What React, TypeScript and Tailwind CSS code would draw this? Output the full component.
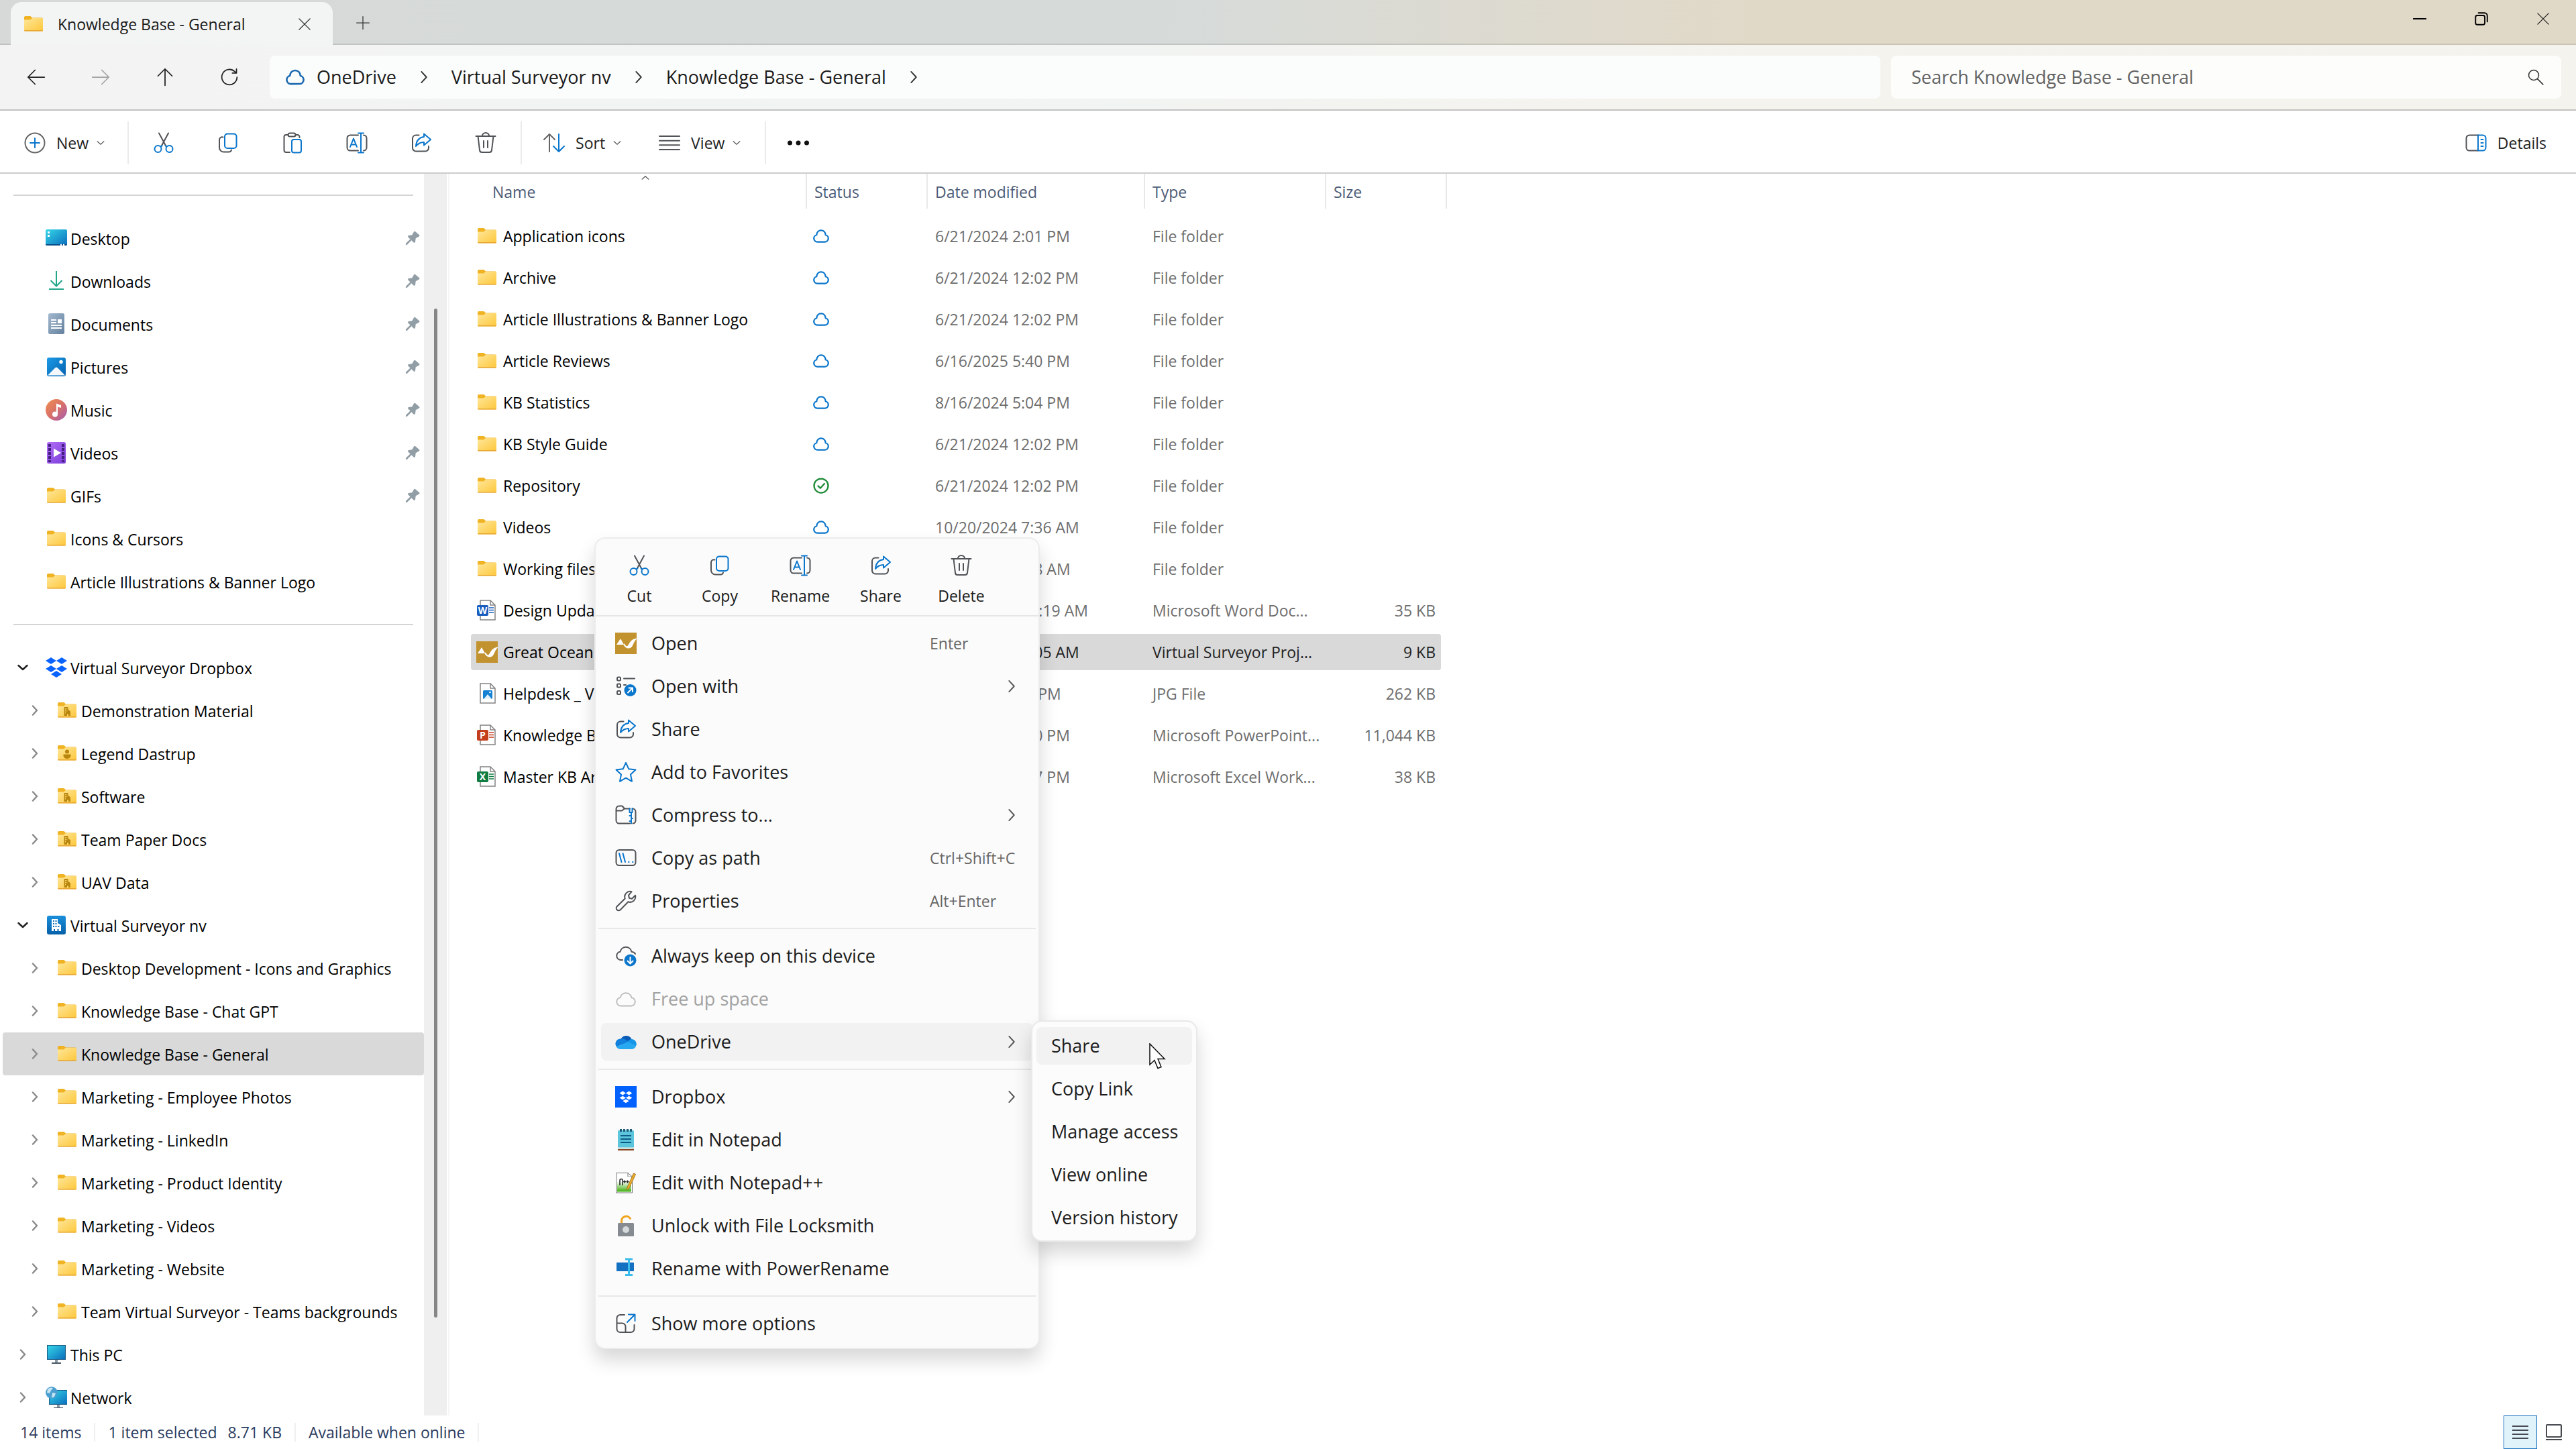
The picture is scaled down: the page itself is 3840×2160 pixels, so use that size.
import type { ReactNode } from "react";
import { clsx } from "clsx";

type IconProps = { className?: string };

const GRAY = "#505357";
const BLUE = "#0a76cc";

/* ── Line icons ── */
function Line({ children, className = "size-8", width = 2, color = GRAY }: IconProps & { children: ReactNode; width?: number; color?: string }) {
  return (
    <svg viewBox="0 0 32 32" className={clsx("shrink-0", className)} fill="none" stroke={color} strokeWidth={width} strokeLinecap="round" strokeLinejoin="round" aria-hidden>
      {children}
    </svg>
  );
}

const CutIcon = (p: IconProps) => (
  <Line {...p}>
    <path d="M9 1.500 19.500 21M23 1.500 12.500 21" />
    <circle cx="7.500" cy="25" r="5" stroke={BLUE} />
    <circle cx="24.500" cy="25" r="5" stroke={BLUE} />
    <path d="m13.500 20-2 1.500M18.500 20l2 1.500" stroke={BLUE} />
  </Line>
);

const CopyIcon = (p: IconProps) => (
  <Line {...p}>
    <path d="M8.500 7.500A4 4 0 0 0 3 11.500V23a6.500 6.500 0 0 0 6.500 6.500H17a4 4 0 0 0 4-3" />
    <rect x="11" y="2.500" width="17.500" height="21.500" rx="4" stroke={BLUE} />
  </Line>
);

const PasteIcon = (p: IconProps) => (
  <Line {...p}>
    <path d="M9.500 4H6.500A3 3 0 0 0 3.500 7v20a3 3 0 0 0 3 3H12M20.500 4h3a3 3 0 0 1 3 3v1" />
    <rect x="9.500" y="1.500" width="11" height="5" rx="2.500" />
    <rect x="15" y="11" width="14" height="19.500" rx="3" stroke={BLUE} />
  </Line>
);

const RenameIcon = (p: IconProps) => (
  <Line {...p}>
    <path d="M18 4.500H6A4.500 4.500 0 0 0 1.500 9v14A4.500 4.500 0 0 0 6 27.500h12M26 4.500a4.500 4.500 0 0 1 4.500 4.500v14a4.500 4.500 0 0 1-4.500 4.500" />
    <path d="M22 1.500v29M18 1.500h8M18 30.500h8M6 22l5-12.500L16 22M7.500 18.500h7" stroke={BLUE} />
  </Line>
);

const ShareIcon = (p: IconProps) => (
  <Line {...p}>
    <path d="M12.500 4.500H8A5 5 0 0 0 3 9.500v14a5 5 0 0 0 5 5h14a5 5 0 0 0 5-5V21" />
    <path d="M20 2.500 30 11 20 19.500V15c-5 0-8.500 1.500-12 6C8.500 13.500 12.500 8 20 7z" stroke={BLUE} />
  </Line>
);

const DeleteIcon = (p: IconProps) => (
  <Line {...p}>
    <path d="M1.500 6h29M11 5.500a5 4.500 0 0 1 10 0M4.500 6l2.500 21a3.500 3.500 0 0 0 3.500 3h11a3.500 3.500 0 0 0 3.500-3l2.500-21M13 13v10M19 13v10" />
  </Line>
);

const CloudIcon = ({ className, color = BLUE }: IconProps & { color?: string }) => (
  <Line className={className} color={color} width={3}>
    <path d="M8.500 27.500a7 7 0 0 1-1.500-13.800C7.500 8.500 11 4.500 16 4.500s8.500 4 9 9.200a7 7 0 0 1-1.500 13.800z" />
  </Line>
);

const Chevron = ({ className, color = "#555", width = 3, d = "M10 3l12 13-12 13" }: IconProps & { color?: string; width?: number; d?: string }) => (
  <Line className={className} color={color} width={width}>
    <path d={d} />
  </Line>
);

const DOWN = "M3 10l13 12 13-12";

const CloseIcon = (p: IconProps) => <Line {...p} color="#222"><path d="M3 3l26 26M29 3 3 29" /></Line>;

const StarIcon = (p: IconProps) => (
  <Line {...p} color={BLUE}>
    <path d="m16 2 4.300 9.300 10.200 1.200-7.500 7 2 10.300L16 24.700 7 29.800l2-10.300-7.500-7 10.200-1.200z" />
  </Line>
);

const OpenWithIcon = (p: IconProps) => (
  <Line {...p}>
    <rect x="3" y="2.500" width="5" height="5" rx="1.500" />
    <rect x="3" y="12.500" width="5" height="5" rx="1.500" />
    <rect x="3" y="23" width="5" height="5" rx="1.500" />
    <path d="M13 4.500h16M13 14h3" />
    <circle cx="22.500" cy="22" r="9" fill={BLUE} stroke="none" />
    <path d="M19 25.500l7-7M20.500 18.500H26V24" stroke="#fff" />
  </Line>
);

const CompressIcon = (p: IconProps) => (
  <Line {...p}>
    <path d="M22 6.500h-8l-3.500-4H6A4.500 4.500 0 0 0 1.500 7v17A4.500 4.500 0 0 0 6 28.500h16M1.500 9.500H10l4-3M26 6.500a4.500 4.500 0 0 1 4.500 4.500v13a4.500 4.500 0 0 1-4 4.500" />
    <path d="M21.500 6v6h4V6M24 12v16.500M21.500 17H24M24 21h2M21.500 25H24" stroke={BLUE} />
  </Line>
);

const PathIcon = (p: IconProps) => (
  <Line {...p}>
    <rect x="1.500" y="4" width="29" height="23" rx="4.500" />
    <path d="M6 9l3.500 13M11.500 9 15 22M20 22h.5M26 22h.5" stroke={BLUE} />
  </Line>
);

const WrenchIcon = (p: IconProps) => (
  <Line {...p}>
    <path d="M24.500 2.200a8 8 0 0 0-9.800 10.300L2.700 24.300a3.500 3.500 0 0 0 5 5l11.800-12A8 8 0 0 0 30 7.700l-5 5-4-1-1-4z" />
  </Line>
);

const KeepIcon = (p: IconProps) => (
  <Line {...p}>
    <path d="M11 22H8A6.200 6.200 0 0 1 7.500 9.700 8.700 8.700 0 0 1 24.500 9.700c2.500.2 4.500 1.300 5.500 3.300" />
    <circle cx="22.500" cy="22.500" r="9" fill={BLUE} stroke="none" />
    <path d="M22.500 18v9M18.500 23.500l4 4 4-4" stroke="#fff" />
  </Line>
);

const FreeUpIcon = () => (
  <Line color="#bdbdbd">
    <path d="M8 26.500A6.200 6.200 0 0 1 7.500 14.200a8.700 8.700 0 0 1 17 0A6.200 6.200 0 0 1 24 26.500z" />
  </Line>
);

const MoreOptionsIcon = (p: IconProps) => (
  <Line {...p}>
    <path d="M14 3H7.500A5 5 0 0 0 2.500 8v16a5 5 0 0 0 5 5h16a5 5 0 0 0 5-5v-6M2.500 15.500h8a5 5 0 0 1 5 5V29" />
    <path d="M18 14 29 3M20 2.500h9.500V12" stroke={BLUE} />
  </Line>
);

/* ── Coloured icons ── */
function FolderIcon({ className = "w-7 h-6", badge }: IconProps & { badge?: "building" | "person" }) {
  return (
    <svg viewBox="0 0 28 24" className={clsx("shrink-0", className)} aria-hidden>
      <defs>
        <linearGradient id="folder" x1="0" y1="0" x2="1" y2="1">
          <stop offset="0" stopColor="#ffe79b" />
          <stop offset="1" stopColor="#fdc73a" />
        </linearGradient>
      </defs>
      <path d="M0 2a2 2 0 0 1 2-2h7.500l2.500 2.500H26a2 2 0 0 1 2 2V8H0z" fill="#f0b323" />
      <path d="M0 5.500h9L12 3h15a1 1 0 0 1 1 1v17a1.500 1.500 0 0 1-1.500 1.500h-25A1.500 1.500 0 0 1 0 21z" fill="url(#folder)" />
      <path d="M0 21h28a1.500 1.500 0 0 1-1.500 1.500h-25A1.500 1.500 0 0 1 0 21z" fill="#e8a735" />
      {badge === "building" && (
        <g>
          <path d="M10 7h5.500v3.500l3.500 3V20H9.500V7z" fill="#b8860f" />
          <path d="M11 9h1v1.500h-1zM13.200 9h1v1.500h-1zM11 12h1v1.500h-1zM13.200 12h1v1.500h-1zM11 15h1v1.500h-1zM14 17.500h2V20h-2z" fill="#fbd865" />
        </g>
      )}
      {badge === "person" && (
        <g fill="#b8860f">
          <circle cx="14" cy="9.500" r="3" />
          <path d="M8.500 13.500h11v2a5.500 4.500 0 0 1-11 0z" />
        </g>
      )}
    </svg>
  );
}

function Art({ children, className = "size-8" }: IconProps & { children: ReactNode }) {
  return <svg viewBox="0 0 32 32" className={clsx("shrink-0", className)} aria-hidden>{children}</svg>;
}

const DesktopIcon = () => (
  <Art>
    <defs>
      <linearGradient id="desk" x1="0" y1="0" x2="1" y2="1">
        <stop offset="0" stopColor="#34d6e8" />
        <stop offset="1" stopColor="#0b6dbd" />
      </linearGradient>
    </defs>
    <rect y="3" width="32" height="24" rx="2" fill="url(#desk)" />
    <path d="M0 25h32a2 2 0 0 1-2 2H2a2 2 0 0 1-2-2z" fill="#0a4d86" />
    <path d="M3 6h3v3H3zM3 11h3v3H3zM22 25h2v2h-2zM26 25h2v2h-2z" fill="#fff" />
  </Art>
);

const DownloadsIcon = () => (
  <Art>
    <path d="M16 1v22M7.500 15l8.500 8.500 8.500-8.500M5 28h22" fill="none" stroke="#1fa588" strokeWidth="2" />
  </Art>
);

const DocumentsIcon = () => (
  <Art>
    <defs>
      <linearGradient id="docs" x1="0" y1="0" x2="1" y2="1">
        <stop offset="0" stopColor="#a3b9cf" />
        <stop offset="1" stopColor="#64809e" />
      </linearGradient>
    </defs>
    <rect x="4" width="24" height="31" rx="2.500" fill="url(#docs)" />
    <path d="M8 9h8v2H8zM8 13h8v2H8zM18 9h6v6h-6zM8 17h16v2H8zM8 21h16v2H8z" fill="#fff" />
  </Art>
);

const PicturesIcon = () => (
  <Art>
    <defs>
      <linearGradient id="pics" x1="0" y1="0" x2="1" y2="1">
        <stop offset="0" stopColor="#1c9be6" />
        <stop offset="1" stopColor="#0461ae" />
      </linearGradient>
    </defs>
    <rect x="2" y="2" width="28" height="28" rx="3" fill="url(#pics)" />
    <circle cx="23" cy="8.500" r="2.700" fill="#fff" />
    <path d="M3 28.500 14 17.500a3 3 0 0 1 4 0l11 11z" fill="#f3f8fd" />
  </Art>
);

const MusicIcon = () => (
  <Art>
    <defs>
      <linearGradient id="music" x1="0" y1="0" x2="1" y2="1">
        <stop offset="0" stopColor="#f08d4e" />
        <stop offset=".5" stopColor="#d8716a" />
        <stop offset="1" stopColor="#a45bb5" />
      </linearGradient>
    </defs>
    <circle cx="16" cy="16" r="16" fill="url(#music)" />
    <path d="M16 6.500 23 9v4l-5-1.500v11h-2z" fill="#fff" />
    <circle cx="14" cy="22.500" r="4" fill="#fff" />
  </Art>
);

const VideosIcon = () => (
  <Art>
    <defs>
      <linearGradient id="vids" x1="0" y1="0" x2="1" y2="1">
        <stop offset="0" stopColor="#b06ef5" />
        <stop offset="1" stopColor="#7c3ddb" />
      </linearGradient>
    </defs>
    <rect x="2" width="28" height="32" rx="2.500" fill="url(#vids)" />
    <path d="M4 3h4v4H4zM4 9h4v4H4zM4 15h4v4H4zM4 21h4v4H4zM4 27h4v3H4zM24 3h4v4h-4zM24 9h4v4h-4zM24 15h4v4h-4zM24 21h4v4h-4zM24 27h4v3h-4z" fill="#451f80" />
    <path d="m12 9.500 11 6.500-11 6.500z" fill="#fff" />
  </Art>
);

const DIAMONDS = "M8 1l8 5-8 5-8-5zM24 1l8 5-8 5-8-5zM8 13l8 5-8 5-8-5zM24 13l8 5-8 5-8-5zM16 21l8 5-8 5-8-5z";

const DropboxIcon = () => (
  <Art>
    <path d={DIAMONDS} fill="#0a63ff" />
  </Art>
);

const DropboxTile = () => (
  <Art>
    <path d="M0 0h32v32H0z" fill="#0061fe" />
    <path d={DIAMONDS} fill="#fff" transform="translate(6.500 7) scale(.59)" />
  </Art>
);

const OrgIcon = () => (
  <Art>
    <defs>
      <linearGradient id="org" x1="0" y1="0" x2="0" y2="1">
        <stop offset="0" stopColor="#1a8fdb" />
        <stop offset="1" stopColor="#0560a8" />
      </linearGradient>
    </defs>
    <rect x="2" y="2" width="28" height="28" rx="3" fill="url(#org)" />
    <path d="M9 7h9v6l5 3v9H9z" fill="#fff" />
    <path d="M11 9h2v2h-2zM14.500 9h2v2h-2zM11 13h2v2h-2zM14.500 13h2v2h-2zM11 17h2v2h-2zM14.500 17h2v2h-2zM18.500 17h2v2h-2zM12 22h2v3h-2zM17.500 22h2v3h-2z" fill="#0b6db8" />
  </Art>
);

const PcShape = () => (
  <>
    <rect x="2" y="2" width="28" height="22" fill="#1b5c86" />
    <rect x="3" y="3" width="26" height="20" fill="url(#desk)" />
    <path d="M14 24h4v4h-4z" fill="#8a9aa5" />
    <path d="M9 28h14v2H9z" fill="#4b5a66" />
  </>
);

const PcIcon = () => <Art><PcShape /></Art>;

const NetworkIcon = () => (
  <Art>
    <g transform="translate(3 3)"><PcShape /></g>
    <circle cx="9" cy="9" r="9" fill="#4a9fd0" />
    <path d="M3 4c3-3 6-3 8-2l-3 4-2 4-4-1zM10 9l5 1-2 5-4 2z" fill="#c7e4f2" />
  </Art>
);

const SurveyorIcon = () => (
  <Art>
    <path d="M0 0h32v32H0z" fill="#c2922e" />
    <path d="m2 18 6-9 5 9z" fill="#fff" />
    <path d="M13 17c3 6 6 5 8 1s4-7 9-8c-2 2-3 5-5 9s-8 6-12-2z" fill="#fff" stroke="#fff" strokeWidth="2" />
  </Art>
);

function OfficeIcon({ letter, color }: { letter: string; color: string }) {
  return (
    <Art>
      <path d="M6 1h15l7 7v22H6z" fill="#fff" stroke="#828282" strokeWidth="1.500" />
      <path d="M21 1v7h7" fill="none" stroke="#828282" strokeWidth="1.500" />
      <path d="M19 12h7M19 15.500h7M19 19h7" stroke={color} strokeWidth="1.500" />
      <rect x="1" y="8" width="17" height="16" rx="2" fill={color} />
      <text x="9.500" y="21" fontSize="14" fontWeight="700" textAnchor="middle" fill="#fff">{letter}</text>
    </Art>
  );
}

const JpgIcon = () => (
  <Art>
    <path d="M6 1h15l7 7v22H6z" fill="#fff" stroke="#828282" strokeWidth="1.500" />
    <path d="M21 1v7h7" fill="none" stroke="#828282" strokeWidth="1.500" />
    <rect x="10" y="11" width="14" height="13" rx="1.500" fill="#1481d4" />
    <path d="m11 24 6-7 6 7z" fill="#e6f2fb" />
    <circle cx="20.500" cy="14" r="1.300" fill="#fff" />
  </Art>
);

const OneDriveIcon = () => (
  <Art>
    <path d="M8 13a9 9 0 0 1 16.500-1L14 20z" fill="#0a5bb5" />
    <path d="M7.500 11.500A7.500 7.500 0 0 0 2 23.500L20 16l-5-3.500a9 9 0 0 0-7.500-1z" fill="#1180dc" />
    <path d="M24.500 12A7.300 7.300 0 0 1 31 22.500L18 16.500a9 9 0 0 1 6.500-4.500z" fill="#1696e8" />
    <path d="M2 23.500A7 7 0 0 0 7.500 27h17a7.300 7.300 0 0 0 6.500-4.500L19 16z" fill="#27a9f2" />
  </Art>
);

const NotepadIcon = () => (
  <Art>
    <rect x="4" y="28" width="24" height="4" rx="1" fill="#8a431c" />
    <rect x="4" y="2" width="24" height="28" rx="1.500" fill="#5cc5dc" />
    <path d="M4 27.500h24v2H4z" fill="#f2ece6" />
    <path d="M8.500 0v4M13.500 0v4M18.500 0v4M23.500 0v4" stroke="#1b5b78" strokeWidth="3" />
    <path d="M8 10h16M8 15h16M8 20h16" stroke="#0c5c86" strokeWidth="2" />
  </Art>
);

const NotepadPlusIcon = () => (
  <Art>
    <defs>
      <linearGradient id="npp" x1="0" y1="0" x2="0" y2="1">
        <stop offset="0.300" stopColor="#fff" />
        <stop offset="1" stopColor="#3fae0f" />
      </linearGradient>
    </defs>
    <path d="M1.500 1.500H19l6.500 5.500v24h-24z" fill="#fff" stroke="#777" />
    <path d="M19 1.500V7h6.500" fill="none" stroke="#777" />
    <path d="M3 7h21v22.500H3z" fill="url(#npp)" />
    <path d="M7 20v-7.500q0-2 2-2t2 2V20M12 14.500h4M14 12.500v4M16.500 14.500h4M18.500 12.500v4" fill="none" stroke="#222" strokeWidth="1.500" />
    <path d="m18 23 9.500-21 3 1.500L21 24l-4 3z" fill="#e9ae2d" stroke="#a8741b" />
  </Art>
);

const LockIcon = () => (
  <Art>
    <path d="M9.500 12V9a7 7 0 0 1 13.500-2.500" fill="none" stroke="#f0a41f" strokeWidth="3" />
    <rect x="4" y="12" width="24" height="20" rx="1.500" fill="#858b91" />
    <circle cx="16" cy="22" r="5" fill="#d5d9dc" />
  </Art>
);

const PowerRenameIcon = () => (
  <Art>
    <rect x="2" y="7" width="26" height="13" rx="1" fill="#1470c0" />
    <path d="M20.500 2v24M15 2h11M15 25.500h11" stroke="#3cbcea" strokeWidth="3" />
  </Art>
);

const PinIcon = () => (
  <svg viewBox="0 0 22 22" className="size-[22px] shrink-0" fill="#929ea6" aria-hidden>
    <path d="M13 1.500a1.500 1.500 0 0 1 2.200-.3l5.500 4.800a1.500 1.500 0 0 1 0 2.400l-5 2.800-.7 5.500a1.500 1.500 0 0 1-2.600.6l-3-3L3 20.800 0.800 21 1 18.800l6.500-6.300-3-3a1.500 1.500 0 0 1 .8-2.500l5-.7z" />
  </svg>
);

/* ── Data ── */
type TreeItem = { label: string; icon: ReactNode; level?: 1 | 2; state?: "open" | "closed"; pinned?: boolean; selected?: boolean };

const QUICK_ACCESS: TreeItem[] = [
  { label: "Desktop", icon: <DesktopIcon />, pinned: true },
  { label: "Downloads", icon: <DownloadsIcon />, pinned: true },
  { label: "Documents", icon: <DocumentsIcon />, pinned: true },
  { label: "Pictures", icon: <PicturesIcon />, pinned: true },
  { label: "Music", icon: <MusicIcon />, pinned: true },
  { label: "Videos", icon: <VideosIcon />, pinned: true },
  { label: "GIFs", icon: <FolderIcon />, pinned: true },
  { label: "Icons & Cursors", icon: <FolderIcon /> },
  { label: "Article Illustrations & Banner Logo", icon: <FolderIcon /> },
];

const TREE: TreeItem[] = [
  { label: "Virtual Surveyor Dropbox", icon: <DropboxIcon />, state: "open" },
  { label: "Demonstration Material", icon: <FolderIcon badge="building" />, level: 2, state: "closed" },
  { label: "Legend Dastrup", icon: <FolderIcon badge="person" />, level: 2, state: "closed" },
  { label: "Software", icon: <FolderIcon badge="building" />, level: 2, state: "closed" },
  { label: "Team Paper Docs", icon: <FolderIcon badge="building" />, level: 2, state: "closed" },
  { label: "UAV Data", icon: <FolderIcon badge="building" />, level: 2, state: "closed" },
  { label: "Virtual Surveyor nv", icon: <OrgIcon />, state: "open" },
  { label: "Desktop Development - Icons and Graphics", icon: <FolderIcon />, level: 2, state: "closed" },
  { label: "Knowledge Base - Chat GPT", icon: <FolderIcon />, level: 2, state: "closed" },
  { label: "Knowledge Base - General", icon: <FolderIcon />, level: 2, state: "closed", selected: true },
  { label: "Marketing - Employee Photos", icon: <FolderIcon />, level: 2, state: "closed" },
  { label: "Marketing - LinkedIn", icon: <FolderIcon />, level: 2, state: "closed" },
  { label: "Marketing - Product Identity", icon: <FolderIcon />, level: 2, state: "closed" },
  { label: "Marketing - Videos", icon: <FolderIcon />, level: 2, state: "closed" },
  { label: "Marketing - Website", icon: <FolderIcon />, level: 2, state: "closed" },
  { label: "Team Virtual Surveyor - Teams backgrounds", icon: <FolderIcon />, level: 2, state: "closed" },
  { label: "This PC", icon: <PcIcon />, state: "closed" },
  { label: "Network", icon: <NetworkIcon />, state: "closed" },
];

type FileRow = { name: string; icon?: ReactNode; status?: "cloud" | "synced"; date: string; type: string; size?: string; selected?: boolean };

const FILES: FileRow[] = [
  { name: "Application icons", status: "cloud", date: "6/21/2024 2:01 PM", type: "File folder" },
  { name: "Archive", status: "cloud", date: "6/21/2024 12:02 PM", type: "File folder" },
  { name: "Article Illustrations & Banner Logo", status: "cloud", date: "6/21/2024 12:02 PM", type: "File folder" },
  { name: "Article Reviews", status: "cloud", date: "6/16/2025 5:40 PM", type: "File folder" },
  { name: "KB Statistics", status: "cloud", date: "8/16/2024 5:04 PM", type: "File folder" },
  { name: "KB Style Guide", status: "cloud", date: "6/21/2024 12:02 PM", type: "File folder" },
  { name: "Repository", status: "synced", date: "6/21/2024 12:02 PM", type: "File folder" },
  { name: "Videos", status: "cloud", date: "10/20/2024 7:36 AM", type: "File folder" },
  { name: "Working files", status: "cloud", date: "6/21/2024 8:38 AM", type: "File folder" },
  { name: "Design Updates", icon: <OfficeIcon letter="W" color="#1a5dbe" />, status: "cloud", date: "10/21/2024 10:19 AM", type: "Microsoft Word Doc...", size: "35 KB" },
  { name: "Great Ocean Road", icon: <SurveyorIcon />, status: "cloud", date: "6/21/2024 10:05 AM", type: "Virtual Surveyor Proj...", size: "9 KB", selected: true },
  { name: "Helpdesk _ Virtual", icon: <JpgIcon />, status: "cloud", date: "9/9/2024 2:12 PM", type: "JPG File", size: "262 KB" },
  { name: "Knowledge Base", icon: <OfficeIcon letter="P" color="#c43e1c" />, status: "cloud", date: "6/21/2024 1:10 PM", type: "Microsoft PowerPoint...", size: "11,044 KB" },
  { name: "Master KB Articles", icon: <OfficeIcon letter="X" color="#107c41" />, status: "cloud", date: "6/21/2024 1:17 PM", type: "Microsoft Excel Work...", size: "38 KB" },
];

type MenuEntry = { label: string; icon: ReactNode; hint?: string; submenu?: boolean; active?: boolean; disabled?: boolean };

const MENU_ACTIONS = [
  { label: "Cut", icon: <CutIcon /> },
  { label: "Copy", icon: <CopyIcon /> },
  { label: "Rename", icon: <RenameIcon /> },
  { label: "Share", icon: <ShareIcon /> },
  { label: "Delete", icon: <DeleteIcon /> },
];

const MENU_GROUPS: MenuEntry[][] = [
  [
    { label: "Open", icon: <SurveyorIcon />, hint: "Enter" },
    { label: "Open with", icon: <OpenWithIcon />, submenu: true },
    { label: "Share", icon: <ShareIcon /> },
    { label: "Add to Favorites", icon: <StarIcon /> },
    { label: "Compress to...", icon: <CompressIcon />, submenu: true },
    { label: "Copy as path", icon: <PathIcon />, hint: "Ctrl+Shift+C" },
    { label: "Properties", icon: <WrenchIcon />, hint: "Alt+Enter" },
  ],
  [
    { label: "Always keep on this device", icon: <KeepIcon /> },
    { label: "Free up space", icon: <FreeUpIcon />, disabled: true },
    { label: "OneDrive", icon: <OneDriveIcon />, submenu: true, active: true },
  ],
  [
    { label: "Dropbox", icon: <DropboxTile />, submenu: true },
    { label: "Edit in Notepad", icon: <NotepadIcon /> },
    { label: "Edit with Notepad++", icon: <NotepadPlusIcon /> },
    { label: "Unlock with File Locksmith", icon: <LockIcon /> },
    { label: "Rename with PowerRename", icon: <PowerRenameIcon /> },
  ],
  [{ label: "Show more options", icon: <MoreOptionsIcon /> }],
];

const SUBMENU = ["Share", "Copy Link", "Manage access", "View online", "Version history"];

/* ── Title bar ── */
function TitleBar() {
  return (
    <header className="flex h-[67px] items-end border-b-2 border-black/10 bg-linear-to-r from-[#d6d9d8] via-[#d6dbda] via-45% to-[#e1d9c8] to-68% pl-4">
      <div className="-mb-0.5 flex h-16 w-[480px] items-center rounded-t-2xl bg-[#f3f4f4] pl-5 pr-[18px] pt-0.5 text-[23px]">
        <FolderIcon />
        <span className="ml-[22px] flex-1 whitespace-nowrap">Knowledge Base - General</span>
        <button aria-label="Close tab" className="grid size-12 place-items-center"><CloseIcon className="size-5" /></button>
      </div>
      <button aria-label="New tab" className="ml-3.5 grid size-[62px] place-items-center">
        <Line className="size-5" color="#333"><path d="M16 1v30M1 16h30" /></Line>
      </button>
      <div className="ml-auto flex self-start pr-[3px]">
        <button aria-label="Minimize" className="grid h-14 w-[92px] place-items-center">
          <Line className="size-5" color="#000" width={3}><path d="M1 16h30" /></Line>
        </button>
        <button aria-label="Restore" className="grid h-14 w-[92px] place-items-center">
          <Line className="size-5" color="#000" width={3}>
            <rect x="2" y="8" width="22" height="22" rx="4" />
            <path d="M9 2h14a7 7 0 0 1 7 7v14" />
          </Line>
        </button>
        <button aria-label="Close" className="grid h-14 w-[92px] place-items-center"><CloseIcon className="size-5" /></button>
      </div>
    </header>
  );
}

/* ── Address bar ── */
function AddressBar() {
  return (
    <div className="flex h-[98px] items-center border-b-2 border-black/20 bg-linear-to-r from-[#f3f3f3] via-[#f1f4f3] via-40% to-[#f5f3ee] to-65% pl-1.5 pr-[22px]">
      <button aria-label="Back" className="grid h-16 w-24 place-items-center"><Line className="size-7" color="#222"><path d="M30 16H2M14 4 2 16l12 12" /></Line></button>
      <button aria-label="Forward" className="grid h-16 w-24 place-items-center"><Line className="size-7" color="#a3a3a3"><path d="M2 16h28M18 4l12 12-12 12" /></Line></button>
      <button aria-label="Up" className="grid h-16 w-24 place-items-center"><Line className="size-7" color="#222"><path d="M16 30V2M4 14 16 2l12 12" /></Line></button>
      <button aria-label="Refresh" className="grid h-16 w-24 place-items-center"><Line className="size-7" color="#222"><path d="M29 16A13 13 0 1 1 25 6.500L28 9M28 2v7h-7" /></Line></button>
      <nav aria-label="Address" className="ml-3 flex h-16 flex-1 items-center rounded-lg bg-[#fbfdfc] pl-6 text-[27px]">
        <CloudIcon className="size-7" color="#1a68b0" />
        <a href="#onedrive" className="ml-[18px]">OneDrive</a>
        <Chevron className="mx-[31px] size-5" color="#333" />
        <a href="#vs">Virtual Surveyor nv</a>
        <Chevron className="mx-[31px] size-5" color="#333" />
        <a href="#kb">Knowledge Base - General</a>
        <Chevron className="mx-[31px] size-5" color="#333" />
      </nav>
      <label className="ml-4 flex h-16 w-[26.2%] items-center rounded-lg bg-[#fdfdfb] pl-[30px] pr-[26px]">
        <input type="search" aria-label="Search" placeholder="Search Knowledge Base - General" className="min-w-0 flex-1 bg-transparent text-[27px] outline-none placeholder:text-[#636363]" />
        <Line className="size-6" color="#333"><circle cx="12" cy="12" r="10" /><path d="m19.500 19.500 11 11" /></Line>
      </label>
    </div>
  );
}

/* ── Command bar ── */
const Separator = () => <span className="h-16 w-0.5 bg-[#ebebeb]" />;

function CommandBar() {
  const actions: [string, ReactNode][] = [
    ["Cut", <CutIcon />],
    ["Copy", <CopyIcon />],
    ["Paste", <PasteIcon />],
    ["Rename", <RenameIcon />],
    ["Share", <ShareIcon />],
    ["Delete", <DeleteIcon />],
  ];
  return (
    <div className="flex h-[94px] items-center border-b-2 border-black/20 bg-white pl-9 pr-11 pt-1 text-[23px] text-[#222]">
      <button className="mr-[34px] flex items-center">
        <Line color="#666"><circle cx="16" cy="16" r="14.500" /><path d="M16 9v14M9 16h14" stroke={BLUE} /></Line>
        <span className="ml-4">New</span>
        <Chevron className="ml-3 size-3" d={DOWN} />
      </button>
      <Separator />
      <div className="flex px-1">
        {actions.map(([label, icon]) => (
          <button key={label} aria-label={label} className="grid h-16 w-24 place-items-center">{icon}</button>
        ))}
      </div>
      <Separator />
      <button className="ml-8 flex items-center">
        <Line color="#666"><path d="M9 29V3M1 11l8-8 8 8" /><path d="M23 3v26M15 21l8 8 8-8" stroke={BLUE} /></Line>
        <span className="ml-4">Sort</span>
        <Chevron className="ml-3 size-3" d={DOWN} />
      </button>
      <button className="ml-14 mr-9 flex items-center">
        <Line><path d="M1 6h30M1 12.700h30M1 19.300h30M1 26h30" /></Line>
        <span className="ml-4">View</span>
        <Chevron className="ml-3 size-3" d={DOWN} />
      </button>
      <Separator />
      <button aria-label="See more" className="ml-8">
        <svg viewBox="0 0 32 32" className="size-8" fill="#111" aria-hidden><circle cx="3.500" cy="16" r="3.500" /><circle cx="16" cy="16" r="3.500" /><circle cx="28.500" cy="16" r="3.500" /></svg>
      </button>
      <button className="ml-auto flex items-center">
        <Line>
          <path d="M19 4.500H6A4.500 4.500 0 0 0 1.500 9v14A4.500 4.500 0 0 0 6 27.500h13" />
          <path d="M19 4.500h7A4.500 4.500 0 0 1 30.500 9v14a4.500 4.500 0 0 1-4.500 4.500h-7zM23.500 11h3M23.500 16h3M23.500 21h3" stroke={BLUE} />
        </Line>
        <span className="ml-4">Details</span>
      </button>
    </div>
  );
}

/* ── Navigation pane ── */
function TreeRow({ item }: { item: TreeItem }) {
  const nested = item.level === 2;
  return (
    <li>
      <button
        className={clsx(
          "flex h-16 w-full items-center rounded-sm pr-1.5 text-left",
          nested ? "pl-[38px]" : "pl-5",
          item.selected && "bg-[#d9d9d9]"
        )}
      >
        <span className={clsx("grid w-5 shrink-0 place-items-center", nested ? "mr-[22px]" : "mr-6")}>
          {item.state === "open" && <Chevron className="size-4" color="#222" width={5} d={DOWN} />}
          {item.state === "closed" && <Chevron className="size-4" color="#8a8a8a" width={5} />}
        </span>
        <span className="grid w-8 shrink-0 place-items-center">{item.icon}</span>
        <span className="ml-[5px] flex-1 pt-0.5 whitespace-nowrap">{item.label}</span>
        {item.pinned && <PinIcon />}
      </button>
    </li>
  );
}

function NavigationPane() {
  return (
    <aside className="flex w-[670px] shrink-0 overflow-hidden border-r-2 border-[#f5f5f5] text-[23px] text-black">
      <div className="min-w-0 flex-1 pl-1">
        <div className="mx-4 flex h-16 items-center"><hr className="w-full border-t-2 border-[#d4d4d4]" /></div>
        <ul>{QUICK_ACCESS.map((item) => <TreeRow key={item.label} item={item} />)}</ul>
        <div className="mx-4 flex h-16 items-center"><hr className="w-full border-t-2 border-[#d4d4d4]" /></div>
        <ul>{TREE.map((item) => <TreeRow key={item.label} item={item} />)}</ul>
      </div>
      <div className="mr-0.5 w-[34px] shrink-0 bg-[#efefef] pt-[201px]">
        <div className="mx-auto h-[1504px] w-[5px] rounded-full bg-[#868686]" />
      </div>
    </aside>
  );
}

/* ── File list ── */
function StatusIcon({ status }: { status?: FileRow["status"] }) {
  if (status === "synced") {
    return <Line className="size-6" color="#1d8a35" width={3}><circle cx="16" cy="16" r="14" /><path d="m10 16.500 4.500 4.500 8-9" /></Line>;
  }
  return <CloudIcon className="size-6" />;
}

function FileTable() {
  const head = "border-r-2 border-[#e8e8e8] p-0 pl-[11px] pt-0.5 text-left font-normal";
  const cell = "flex h-[54px] items-center pl-3 whitespace-nowrap";
  return (
    <main className="min-w-0 flex-1 pl-8">
      <table className="w-[1454px] table-fixed border-collapse text-[23px]">
        <colgroup>
          <col className="w-[500px]" />
          <col className="w-[180px]" />
          <col className="w-[324px]" />
          <col className="w-[270px]" />
          <col className="w-[180px]" />
        </colgroup>
        <thead className="text-[#4c5b76]">
          <tr className="h-[52px]">
            <th className="relative border-r-2 border-[#e8e8e8] p-0 pl-8 pt-0.5 text-left font-normal">
              Name
              <Chevron className="absolute left-1/2 top-0 ml-1 size-3" d="M3 22l13-12 13 12" />
            </th>
            <th className={head}>Status</th>
            <th className={head}>Date modified</th>
            <th className={head}>Type</th>
            <th className={head}>Size</th>
          </tr>
        </thead>
        <tbody>
          <tr className="h-2.5" aria-hidden />
          {FILES.map((f) => {
            const bg = f.selected && "bg-[#d9d9d9]";
            const tone = f.selected ? "text-[#222]" : "text-[#6e6e6e]";
            return (
              <tr key={f.name} className="h-[62px]">
                <td className="p-0">
                  <div className={clsx("flex h-[54px] items-center rounded-l-sm pl-2 whitespace-nowrap text-black", bg)}>
                    <span className="grid w-8 place-items-center">{f.icon ?? <FolderIcon />}</span>
                    <span className="ml-2">{f.name}</span>
                  </div>
                </td>
                <td className="p-0"><div className={clsx("flex h-[54px] items-center pl-2.5", bg)}><StatusIcon status={f.status} /></div></td>
                <td className="p-0"><div className={clsx(cell, bg, tone)}>{f.date}</div></td>
                <td className="p-0"><div className={clsx(cell, bg, tone)}>{f.type}</div></td>
                <td className="p-0"><div className={clsx("mr-2 flex h-[54px] items-center justify-end rounded-r-sm pr-2 whitespace-nowrap", bg, tone)}>{f.size}</div></td>
              </tr>
            );
          })}
        </tbody>
      </table>
    </main>
  );
}

/* ── Context menu ── */
function ContextMenu() {
  return (
    <div role="menu" className="absolute left-[886px] top-[801px] w-[664px] rounded-2xl border-2 border-[#ececec] bg-[#fbfbfb] pb-1 text-[27px] text-[#1c1c1c] shadow-[0_16px_28px_rgba(0,0,0,0.16)]">
      <div className="flex h-[116px] border-b-2 border-[#e6e6e6] pl-[5px]">
        {MENU_ACTIONS.map((a) => (
          <button key={a.label} role="menuitem" className="flex w-[120px] flex-col items-center gap-3 pt-6 text-[23px]">
            {a.icon}
            <span>{a.label}</span>
          </button>
        ))}
      </div>
      <div className="pt-2">
        {MENU_GROUPS.map((group, i) => (
          <div key={i} className="flex flex-col">
            {i > 0 && <div className="mx-1 flex h-[18px] items-center"><hr className="w-full border-t-2 border-[#e8e8e8]" /></div>}
            {group.map((m) => (
              <button
                key={m.label}
                role="menuitem"
                disabled={m.disabled}
                className={clsx(
                  "mx-2 my-1 flex h-14 items-center rounded-lg pl-[21px] pr-5 text-left",
                  m.active && "bg-[#f2f2f2]",
                  m.disabled && "text-[#a2a2a2]"
                )}
              >
                {m.icon}
                <span className="ml-[22px] flex-1">{m.label}</span>
                {m.hint && <span className="w-[134px] whitespace-nowrap text-[23px] text-[#666]">{m.hint}</span>}
                {m.submenu && <Chevron className="mr-0.5 size-5" />}
              </button>
            ))}
          </div>
        ))}
      </div>
    </div>
  );
}

function OneDriveSubmenu() {
  return (
    <div role="menu" className="absolute left-[1537px] top-[1521px] flex w-[248px] flex-col rounded-2xl border-2 border-[#e9e9e9] bg-[#fcfcfc] px-1.5 pb-0.5 pt-1 text-[27px] text-[#1c1c1c] shadow-[0_16px_28px_rgba(0,0,0,0.16)]">
      {SUBMENU.map((label, i) => (
        <button key={label} role="menuitem" className={clsx("my-1 h-14 rounded-lg pl-[22px] text-left whitespace-nowrap", i === 0 && "bg-[#f2f2f2]")}>
          {label}
        </button>
      ))}
    </div>
  );
}

/* ── Status bar ── */
function StatusBar() {
  return (
    <footer className="flex h-[50px] shrink-0 items-center bg-white pl-[30px] pr-2 text-[23px] text-[#2a3c60]">
      <span>14 items</span>
      <span className="mx-[19px] h-7 w-0.5 bg-[#f0f0f0]" />
      <span>1 item selected</span>
      <span className="ml-4">8.71 KB</span>
      <span className="mx-[19px] h-7 w-0.5 bg-[#f0f0f0]" />
      <span>Available when online</span>
      <span className="mx-[19px] h-7 w-0.5 bg-[#f0f0f0]" />
      <button aria-label="Details view" className="ml-auto grid size-[50px] place-items-center border border-[#1a73c0] bg-[#e0f2fa]">
        <svg viewBox="0 0 24 24" className="size-6" stroke="#474b50" strokeWidth="2" aria-hidden><path d="M0 3h24M0 9h24M0 15h24M0 21h24" /></svg>
      </button>
      <button aria-label="Large icons view" className="grid size-[50px] place-items-center">
        <svg viewBox="0 0 24 24" className="size-6" fill="none" stroke="#474b50" strokeWidth="2" aria-hidden><rect x="1" y="1" width="22" height="18" rx="1" /><path d="M0 23h24" /></svg>
      </button>
    </footer>
  );
}

export default function App() {
  return (
    <div className="relative flex h-screen flex-col overflow-hidden bg-white font-['Open_Sans','Noto_Sans',sans-serif] text-[#1b1b1b]">
      <TitleBar />
      <AddressBar />
      <CommandBar />
      <div className="flex min-h-0 flex-1">
        <NavigationPane />
        <FileTable />
      </div>
      <StatusBar />
      <ContextMenu />
      <OneDriveSubmenu />
      {/* Mouse pointer */}
      <svg viewBox="0 0 26 40" className="absolute left-[1713px] top-[1555px] h-10 w-[26px]" fill="#fff" stroke="#111" strokeWidth="1.500" aria-hidden>
        <path d="M1 1v31l7-6.500 5 12 5-2-5-12h10z" />
      </svg>
    </div>
  );
}
